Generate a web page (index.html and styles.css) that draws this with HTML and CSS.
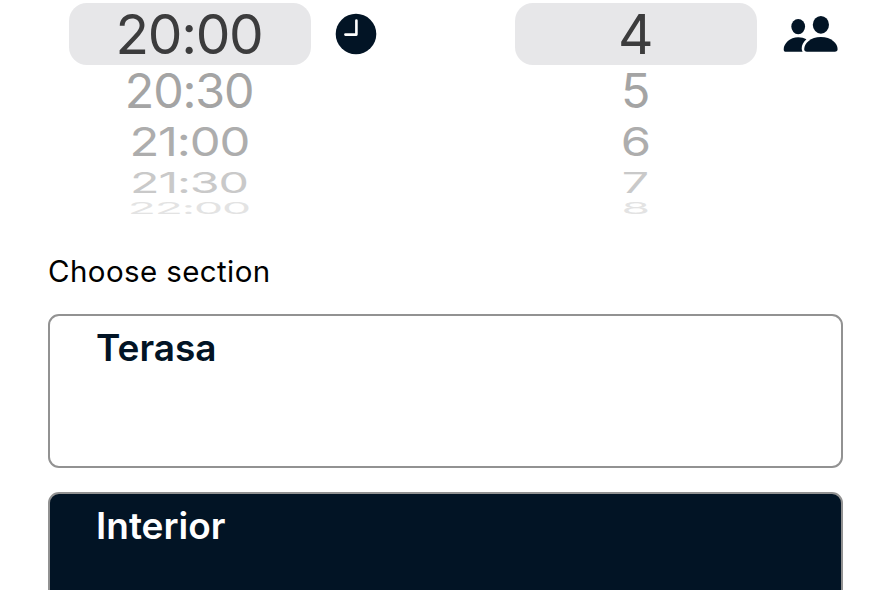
FILE: index.html
```html
<!DOCTYPE html>
<html lang="en">

<head>
  <meta charset="utf-8">
  <meta name="viewport" content="width=device-width, initial-scale=1">
  <title>Reservation</title>
  <link rel="stylesheet" href="styles.css">
</head>

<body>
  <div class="pickers">
    <div class="picker">
      <ul class="wheel">
        <li class="selected"><span>20:00</span></li>
        <li class="next-1"><span>20:30</span></li>
        <li class="next-2"><span>21:00</span></li>
        <li class="next-3"><span>21:30</span></li>
        <li class="next-4"><span>22:00</span></li>
      </ul>
      <svg class="icon-clock" viewBox="0 0 42 42">
        <circle cx="21" cy="21" r="20.3" />
        <path d="M21.4 7.5V21.6H10.4" />
      </svg>
    </div>
    <div class="picker">
      <ul class="wheel">
        <li class="selected"><span>4</span></li>
        <li class="next-1"><span>5</span></li>
        <li class="next-2"><span>6</span></li>
        <li class="next-3"><span>7</span></li>
        <li class="next-4"><span>8</span></li>
      </ul>
      <svg class="icon-people" viewBox="0 0 56 38">
        <ellipse cx="15.2" cy="11.6" rx="6.9" ry="7.6" />
        <ellipse cx="37.9" cy="9.8" rx="8.1" ry="8.9" />
        <path d="M3 36.8Q.7 36.8.7 34.2C.7 28.5 7 22.2 15.2 22.2C18.4 22.2 21.2 23 23.4 24.3C20.2 27 18.7 30.3 18.7 33.6Q18.7 35.6 19.6 36.8Z" />
        <path d="M24 36.8Q21.2 36.8 21.2 34.1C21.2 28.5 27.6 22 37.9 22C48.2 22 54.6 28.5 54.6 34.1Q54.6 36.8 51.8 36.8Z" />
      </svg>
    </div>
  </div>
  <main>
    <h2>Choose section</h2>
    <div class="section">Terasa</div>
    <div class="section active">Interior</div>
  </main>
</body>

</html>
```

FILE: styles.css
```css
* {
  margin: 0;
  padding: 0;
  box-sizing: border-box;
}

body {
  height: 590px;
  background-color: #fff;
  font-family: Inter, "Liberation Sans", sans-serif;
}

ul {
  list-style: none;
}

.pickers {
  display: flex;
  padding: 3px 0 0 69px;
  height: 235px;
}

.picker {
  display: flex;
  flex-shrink: 0;
  width: 446px;
}

.picker:last-child {
  width: 375px;
}

.wheel {
  width: 242px;
  color: #a4a4a4;
  font-size: 55px;
}

.wheel li {
  display: flex;
  align-items: center;
  justify-content: center;
}

.wheel span {
  margin-right: 2px;
  line-height: 1;
  letter-spacing: -1.3px;
}

.wheel .selected {
  height: 62px;
  border-radius: 18px;
  background-color: #e7e7e9;
  color: #3c3c3d;
}

.wheel .next-1 {
  height: 52px;
}

.next-1 span {
  transform: scale(.88, .86);
}

.wheel .next-2 {
  height: 49px;
  color: #adadad;
}

.next-2 span {
  transform: scale(.89, .73);
}

.wheel .next-3 {
  height: 32px;
  color: #c9c9c9;
}

.next-3 span {
  transform: scale(.88, .52);
}

.wheel .next-4 {
  height: 20px;
  color: #e3e3e3;
}

.next-4 span {
  transform: scale(.84, .3);
}

.icon-clock {
  width: 42px;
  height: 42px;
  margin: 10px 0 0 24px;
  fill: #021425;
}

.icon-clock path {
  fill: none;
  stroke: #fff;
  stroke-width: 2.6;
  stroke-linecap: round;
  stroke-linejoin: round;
}

.icon-people {
  width: 56px;
  height: 38px;
  margin: 12px 0 0 26px;
  fill: #021425;
}

main {
  height: 355px;
  padding: 20px 47px 0 48px;
  overflow: hidden;
}

h2 {
  height: 59px;
  line-height: 32px;
  font-size: 29.5px;
  font-weight: 400;
  letter-spacing: .4px;
  color: #000;
}

.section {
  height: 154px;
  margin-bottom: 24px;
  padding: 9px 46px;
  border: 2px solid #929292;
  border-radius: 11px;
  line-height: 46px;
  font-size: 37px;
  font-weight: 600;
  color: #021425;
}

.section.active {
  background-color: #021425;
  color: #fff;
}
```
